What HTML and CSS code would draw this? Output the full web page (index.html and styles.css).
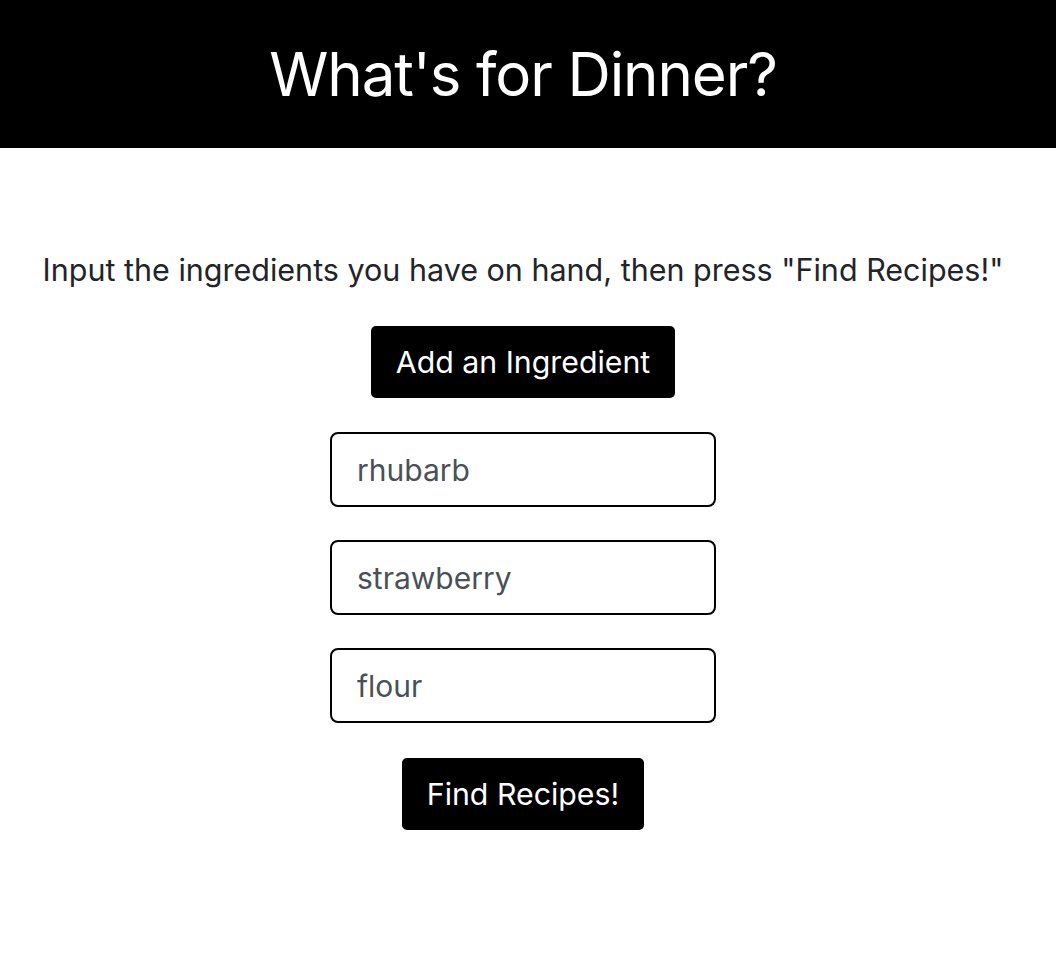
FILE: index.html
```html
<!DOCTYPE html>
<html>
<head>
<meta charset="utf-8">
<link rel="stylesheet" href="styles.css">
</head>
<body>
<header class="header">
  <h1 class="title">What's for Dinner?</h1>
</header>
<main class="main">
  <p class="intro">Input the ingredients you have on hand, then press "Find Recipes!"</p>
  <button class="btn">Add an Ingredient</button>
  <div class="fields">
    <input class="field" type="text" value="rhubarb">
    <input class="field" type="text" value="strawberry">
    <input class="field" type="text" value="flour">
  </div>
  <button class="btn">Find Recipes!</button>
</main>
</body>
</html>
```
FILE: styles.css
```css
html, body {
  margin: 0;
  padding: 0;
  background: #fff;
  font-family: Inter, "Noto Sans", sans-serif;
  color: #212529;
}
.header {
  background: #000;
  height: 148px;
  display: flex;
  align-items: center;
  justify-content: center;
  padding-right: 10px;
}
.title {
  margin: 0;
  color: #fff;
  font-weight: 400;
  font-size: 60px;
  line-height: 1.2;
  letter-spacing: -1.1px;
}
.main {
  display: flex;
  flex-direction: column;
  align-items: center;
  padding-top: 100px;
  padding-right: 10px;
}
.intro {
  margin: 0 0 34px;
  font-size: 30.5px;
  line-height: 44px;
  white-space: nowrap;
}
.btn {
  background: #000;
  color: #fff;
  border: none;
  border-radius: 5px;
  font-family: inherit;
  font-size: 30.3px;
  height: 72px;
  padding: 0 25px;
}
.fields {
  display: flex;
  flex-direction: column;
  gap: 33px;
  margin: 34px 0 35px;
}
.field {
  box-sizing: border-box;
  width: 386px;
  height: 75px;
  border: 2px solid #000;
  border-radius: 8px;
  padding: 0 25px;
  font-family: inherit;
  font-size: 30px;
  color: #495057;
  outline: none;
}
```
